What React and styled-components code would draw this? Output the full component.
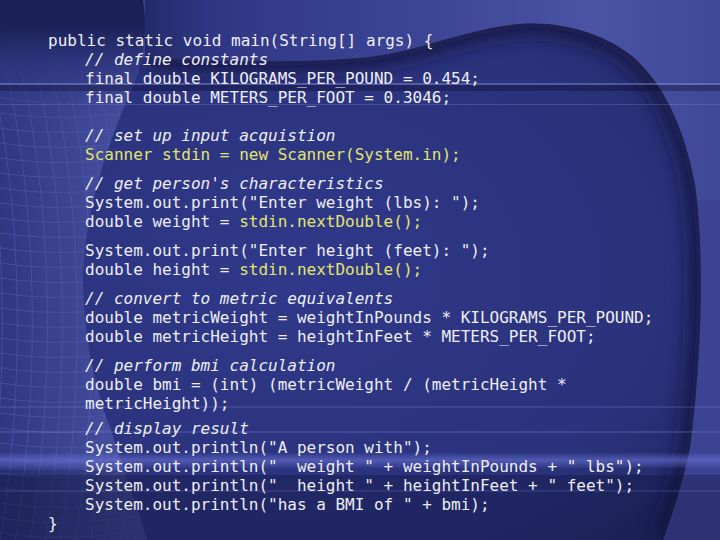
import React from 'react'
import styled, { createGlobalStyle } from 'styled-components'

const GlobalStyle = createGlobalStyle`
  html, body {
    margin: 0;
    padding: 0;
    background: #1b2156;
  }
`

const YELLOW = '#e4e46e'

const Slide = styled.main`
  position: relative;
  width: 720px;
  height: 540px;
  overflow: hidden;
  background: #2b337b;
`

const Backdrop = styled.svg`
  position: absolute;
  inset: 0;
  width: 720px;
  height: 540px;
`

const Code = styled.div`
  position: relative;
  padding: 31px 0 0 48px;
  font-family: "DejaVu Sans Mono", "Liberation Mono", monospace;
  font-size: 16px;
  line-height: 19px;
  color: #eeeef2;
`

const Body = styled.div`
  padding-left: 37px;
`

const Group = styled.div`
  margin-top: ${p => p.$gap}px;
`

const Line = styled.div`
  white-space: pre;
  height: 19px;
  font-style: ${p => (p.$comment ? 'italic' : 'normal')};
  color: ${p => (p.$accent ? YELLOW : 'inherit')};
`

const Accent = styled.span`
  color: ${YELLOW};
`

const BLOB =
  'M0,58 L147,58 C250,63 320,62 370,57 C420,51 470,28 520,24 C565,21 605,35 632,56 C662,82 684,125 695,185 C703,240 704,340 690,448 C683,482 673,512 663,540 L0,540 Z'
const BLOB_EDGE =
  'M147,58 C250,63 320,62 370,57 C420,51 470,28 520,24 C565,21 605,35 632,56 C662,82 684,125 695,185 C703,240 704,340 690,448 C683,482 673,512 663,540'
const LEFT =
  'M0,0 L143,0 C148,30 145,62 127,100 C110,140 88,200 83,270 C82,330 95,390 110,427 C120,460 135,500 147,540 L0,540 Z'

const Background = () => {
  const verticals = []
  for (let x = -24; x < 160; x += 15) {
    verticals.push(`M${x},70 C${x + 34},220 ${x + 34},400 ${x + 6},560`)
  }
  const horizontals = []
  for (let y = 96; y < 560; y += 15) {
    horizontals.push(`M-10,${y} C40,${y + 10} 100,${y + 8} 160,${y - 4}`)
  }

  return (
    <Backdrop viewBox="0 0 720 540" aria-hidden="true">
      <defs>
        <linearGradient id="topFill" gradientUnits="userSpaceOnUse" x1="145" y1="0" x2="720" y2="0">
          <stop offset="0" stopColor="#242b6a" />
          <stop offset="0.12" stopColor="#2f3785" />
          <stop offset="0.5" stopColor="#3d4597" />
          <stop offset="0.78" stopColor="#4a53a4" />
          <stop offset="1" stopColor="#3f4797" />
        </linearGradient>
        <radialGradient id="blobFill" cx="0.42" cy="0.48" r="0.75">
          <stop offset="0" stopColor="#30398a" />
          <stop offset="0.7" stopColor="#2a327b" />
          <stop offset="1" stopColor="#222966" />
        </radialGradient>
        <linearGradient id="leftFill" gradientUnits="userSpaceOnUse" x1="0" y1="0" x2="140" y2="0">
          <stop offset="0" stopColor="#2f3781" />
          <stop offset="1" stopColor="#4a53a4" />
        </linearGradient>
        <linearGradient id="leftTop" gradientUnits="userSpaceOnUse" x1="0" y1="0" x2="0" y2="130">
          <stop offset="0" stopColor="#1b2156" stopOpacity="1" />
          <stop offset="0.22" stopColor="#1d235a" stopOpacity="1" />
          <stop offset="0.5" stopColor="#2b337a" stopOpacity="0.8" />
          <stop offset="1" stopColor="#3a4290" stopOpacity="0" />
        </linearGradient>
        <linearGradient id="band" x1="0" y1="0" x2="0" y2="1">
          <stop offset="0" stopColor="#6a74d8" stopOpacity="0" />
          <stop offset="0.5" stopColor="#6a74d8" stopOpacity="0.6" />
          <stop offset="1" stopColor="#6a74d8" stopOpacity="0.1" />
        </linearGradient>
        <clipPath id="blobClip">
          <path d={BLOB} />
        </clipPath>
        <clipPath id="leftClip">
          <path d={LEFT} />
        </clipPath>
        <filter id="soft" x="-20%" y="-20%" width="140%" height="140%">
          <feGaussianBlur stdDeviation="9" />
        </filter>
      </defs>

      <rect width="720" height="540" fill="#3b4392" />
      <rect x="145" width="575" height="200" fill="url(#topFill)" />
      <path d={BLOB} fill="url(#blobFill)" />
      <g clipPath="url(#blobClip)">
        <path d={BLOB_EDGE} fill="none" stroke="#12173f" strokeWidth="22" opacity="0.85" filter="url(#soft)" />
      </g>

      <path d={LEFT} fill="url(#leftFill)" />
      <g clipPath="url(#leftClip)" fill="none" stroke="#5560b0" strokeWidth="1" opacity="0.55">
        {verticals.map(d => <path key={d} d={d} />)}
        {horizontals.map(d => <path key={d} d={d} />)}
      </g>
      <g clipPath="url(#leftClip)">
        <rect width="160" height="130" fill="url(#leftTop)" />
        <rect y="470" width="160" height="70" fill="#10143a" opacity="0.25" />
      </g>

      <rect y="83" width="720" height="2" fill="#a0aaeb" opacity="0.35" />
      <rect y="85" width="720" height="6" fill="#0a0c28" opacity="0.35" />
      <rect y="104" width="720" height="1" fill="#8c96dc" opacity="0.25" />
      <rect y="406" width="720" height="2" fill="#7882d2" opacity="0.2" />
      <rect y="431" width="720" height="2" fill="#7882d2" opacity="0.25" />
      <rect y="452" width="720" height="16" fill="url(#band)" />
      <rect y="475" width="720" height="65" fill="#0a0c2d" opacity="0.3" />
      <rect y="490" width="720" height="2" fill="#7882d2" opacity="0.18" />
    </Backdrop>
  )
}

const groups = [
  {
    gap: 0,
    lines: [
      { text: '// define constants', comment: true },
      { text: 'final double KILOGRAMS_PER_POUND = 0.454;' },
      { text: 'final double METERS_PER_FOOT = 0.3046;' },
    ],
  },
  {
    gap: 19,
    lines: [
      { text: '// set up input acquistion', comment: true },
      { text: 'Scanner stdin = new Scanner(System.in);', accent: true },
    ],
  },
  {
    gap: 10,
    lines: [
      { text: "// get person's characteristics", comment: true },
      { text: 'System.out.print("Enter weight (lbs): ");' },
      { text: 'double weight = ', tail: 'stdin.nextDouble();' },
    ],
  },
  {
    gap: 10,
    lines: [
      { text: 'System.out.print("Enter height (feet): ");' },
      { text: 'double height = ', tail: 'stdin.nextDouble();' },
    ],
  },
  {
    gap: 10,
    lines: [
      { text: '// convert to metric equivalents', comment: true },
      { text: 'double metricWeight = weightInPounds * KILOGRAMS_PER_POUND;' },
      { text: 'double metricHeight = heightInFeet * METERS_PER_FOOT;' },
    ],
  },
  {
    gap: 10,
    lines: [
      { text: '// perform bmi calculation', comment: true },
      { text: 'double bmi = (int) (metricWeight / (metricHeight *' },
      { text: 'metricHeight));' },
    ],
  },
  {
    gap: 6,
    lines: [
      { text: '// display result', comment: true },
      { text: 'System.out.println("A person with");' },
      { text: 'System.out.println("  weight " + weightInPounds + " lbs");' },
      { text: 'System.out.println("  height " + heightInFeet + " feet");' },
      { text: 'System.out.println("has a BMI of " + bmi);' },
    ],
  },
]

const App = () => {
  return (
    <>
      <GlobalStyle />
      <Slide>
        <Background />
        <Code>
          <Line>{'public static void main(String[] args) {'}</Line>
          <Body>
            {groups.map((group, i) => (
              <Group key={i} $gap={group.gap}>
                {group.lines.map((line, j) => (
                  <Line key={j} $comment={line.comment} $accent={line.accent}>
                    {line.text}
                    {line.tail && <Accent>{line.tail}</Accent>}
                  </Line>
                ))}
              </Group>
            ))}
          </Body>
          <Line>{'}'}</Line>
        </Code>
      </Slide>
    </>
  )
}

export default App
